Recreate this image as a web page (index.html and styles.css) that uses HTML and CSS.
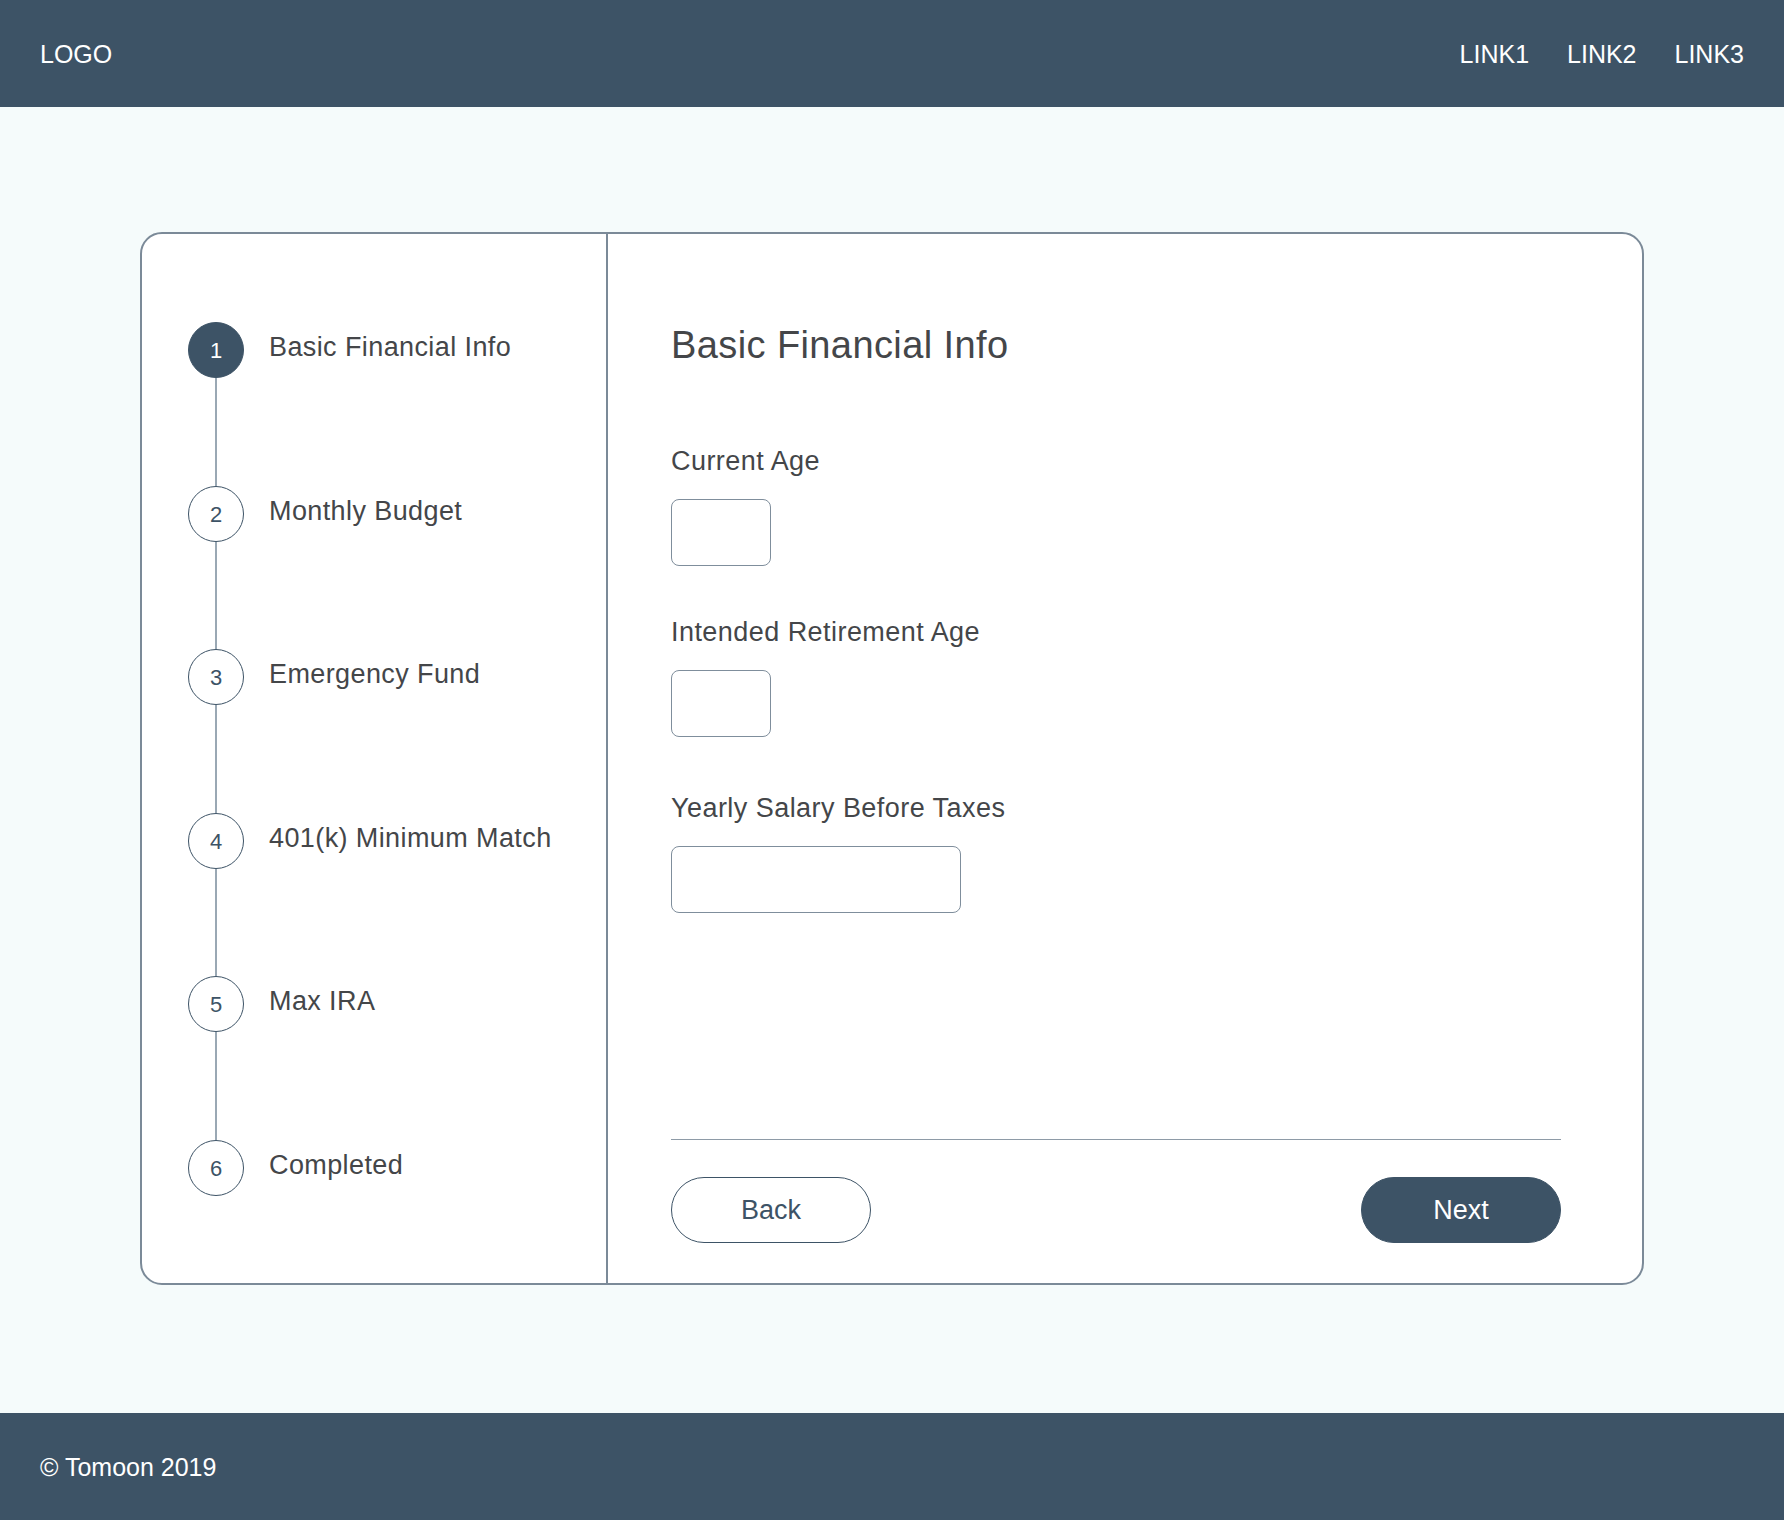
FILE: index.html
```html
<!DOCTYPE html>
<html lang="en">
<head>
<meta charset="utf-8">
<title>Basic Financial Info</title>
<link rel="stylesheet" href="styles.css">
</head>
<body>
<header class="topbar">
  <div class="logo">LOGO</div>
  <nav class="nav">
    <a href="#">LINK1</a>
    <a href="#">LINK2</a>
    <a href="#">LINK3</a>
  </nav>
</header>

<main class="main">
  <section class="card">
    <aside class="steps">
      <div class="step">
        <div class="marker"><span class="circle active">1</span><span class="line"></span></div>
        <div class="step-label">Basic Financial Info</div>
      </div>
      <div class="step">
        <div class="marker"><span class="circle">2</span><span class="line"></span></div>
        <div class="step-label">Monthly Budget</div>
      </div>
      <div class="step">
        <div class="marker"><span class="circle">3</span><span class="line"></span></div>
        <div class="step-label">Emergency Fund</div>
      </div>
      <div class="step">
        <div class="marker"><span class="circle">4</span><span class="line"></span></div>
        <div class="step-label">401(k) Minimum Match</div>
      </div>
      <div class="step">
        <div class="marker"><span class="circle">5</span><span class="line"></span></div>
        <div class="step-label">Max IRA</div>
      </div>
      <div class="step">
        <div class="marker"><span class="circle">6</span></div>
        <div class="step-label">Completed</div>
      </div>
    </aside>

    <div class="pane">
      <h1 class="title">Basic Financial Info</h1>
      <div class="field field-1">
        <label class="label">Current Age</label>
        <input class="input input-short" type="text">
      </div>
      <div class="field field-2">
        <label class="label">Intended Retirement Age</label>
        <input class="input input-short" type="text">
      </div>
      <div class="field field-3">
        <label class="label">Yearly Salary Before Taxes</label>
        <input class="input input-long" type="text">
      </div>
      <div class="actions">
        <button class="btn btn-outline" type="button">Back</button>
        <button class="btn btn-solid" type="button">Next</button>
      </div>
    </div>
  </section>
</main>

<footer class="footer">© Tomoon 2019</footer>
</body>
</html>
```

FILE: styles.css
```css
* { box-sizing: border-box; }

body {
  margin: 0;
  background: #f5fbfb;
  font-family: "Liberation Sans", Arial, Helvetica, sans-serif;
  color: #444649;
}

.topbar {
  height: 107px;
  background: #3d5366;
  color: #fff;
  display: flex;
  align-items: center;
  justify-content: space-between;
  padding: 2px 40px 0 40px;
  font-size: 25px;
}

.nav {
  display: flex;
  gap: 38px;
}

.nav a {
  color: #fff;
  text-decoration: none;
}

.main {
  padding: 125px 0 128px;
}

.card {
  width: 1504px;
  height: 1053px;
  margin: 0 auto;
  background: #fff;
  border: 2px solid #7b8a98;
  border-radius: 22px;
  display: flex;
}

.steps {
  width: 466px;
  border-right: 2px solid #7b8a98;
  padding: 88px 0 0 46px;
  display: flex;
  flex-direction: column;
}

.step {
  display: flex;
  gap: 25px;
}

.marker {
  display: flex;
  flex-direction: column;
  align-items: center;
  width: 56px;
}

.circle {
  width: 56px;
  height: 56px;
  border-radius: 50%;
  border: 1.5px solid #3d5366;
  color: #3d5366;
  display: flex;
  align-items: center;
  justify-content: center;
  font-size: 22px;
  padding-top: 2px;
}

.circle.active {
  background: #3d5366;
  color: #fff;
}

.line {
  width: 2px;
  height: 107.5px;
  background: #9aa8b4;
}

.step-label {
  font-size: 27px;
  line-height: 50px;
  letter-spacing: 0.4px;
}

.pane {
  flex: 1;
  padding: 88px 81px 40px 63px;
  display: flex;
  flex-direction: column;
}

.title {
  margin: 0;
  font-size: 38px;
  line-height: 46px;
  font-weight: normal;
  letter-spacing: 0.4px;
}

.field {
  display: flex;
  flex-direction: column;
  align-items: flex-start;
  gap: 22px;
}

.field-1 { margin-top: 77px; }
.field-2 { margin-top: 50px; }
.field-3 { margin-top: 55px; }

.label {
  font-size: 27px;
  line-height: 32px;
  letter-spacing: 0.45px;
}

.input {
  height: 67px;
  border: 1.5px solid #7f8e9c;
  border-radius: 8px;
  background: #fff;
  font-family: inherit;
  font-size: 24px;
  padding: 0 12px;
}

.input-short { width: 100px; }
.input-long { width: 290px; }

.actions {
  margin-top: auto;
  border-top: 1.5px solid #8e9ba7;
  padding-top: 37px;
  display: flex;
  justify-content: space-between;
}

.btn {
  width: 200px;
  height: 66px;
  border-radius: 33px;
  font-family: inherit;
  font-size: 27px;
  cursor: pointer;
  padding: 0;
}

.btn-outline {
  background: #fff;
  border: 1.5px solid #3d5366;
  color: #3d5366;
}

.btn-solid {
  background: #3d5366;
  border: 1.5px solid #3d5366;
  color: #fff;
}

.footer {
  height: 107px;
  background: #3d5366;
  color: #fff;
  font-size: 25px;
  display: flex;
  align-items: center;
  padding: 2px 40px 0;
}
```
